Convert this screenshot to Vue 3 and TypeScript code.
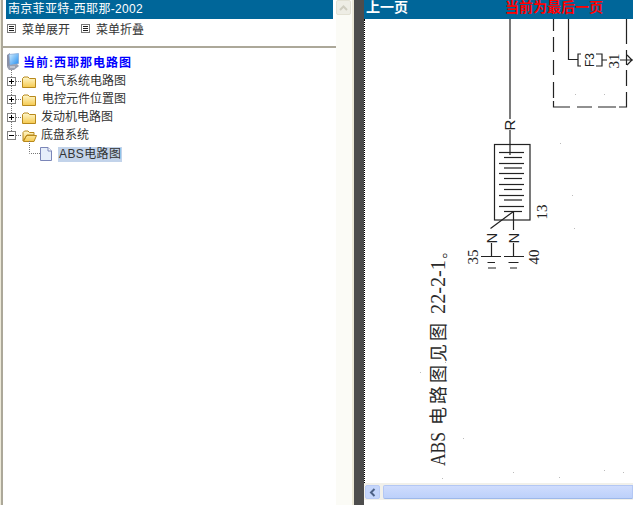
<template>
  <div class="page">
    <div class="edge"></div>
    <div class="left">
      <div class="title">南京菲亚特-西耶那-2002</div>
      <div class="menu">
        <span v-for="m in menus" :key="m" class="menu-item">
          <svg width="9" height="9" viewBox="0 0 9 9">
            <rect x="0.5" y="0.5" width="8" height="8" fill="#fff" stroke="#777" />
            <path d="M2 2.5h5M2 4.5h5M2 6.5h5" stroke="#222" />
          </svg>
          {{ m }}
        </span>
      </div>
      <div class="rule"></div>
      <div class="root">
        <svg width="12" height="17" viewBox="0 0 12 17">
          <defs>
            <linearGradient id="scr" x1="0" y1="0" x2="1" y2="1">
              <stop offset="0" stop-color="#d6efff" />
              <stop offset="1" stop-color="#1e8cf0" />
            </linearGradient>
          </defs>
          <path d="M0 2l3-2v13l-3 1z" fill="#8a90a4" />
          <path d="M2 1.5L11.5 0.5V10.5L3 12.5z" fill="url(#scr)" stroke="#7fa4d2" stroke-width="0.7" />
          <path d="M0 14l3-2 7-1 2 2-5 4H2z" fill="#9aa0b0" />
          <path d="M3 14h5" stroke="#e6e8ee" />
        </svg>
        <span class="root-label">当前:西耶那电路图</span>
      </div>
      <div v-for="(node, i) in nodes" :key="node.label" class="row">
        <svg width="15" height="18" viewBox="0 0 15 18" class="toggle">
          <path
            :d="i === nodes.length - 1 ? 'M4.5 0V7' : 'M4.5 0V18'"
            stroke="#777"
            stroke-dasharray="1 1"
          />
          <path d="M9 11.5h6" stroke="#777" stroke-dasharray="1 1" />
          <rect x="0.5" y="7.5" width="8" height="8" fill="#fff" stroke="#808080" />
          <path d="M2 11.5h5" stroke="#000" />
          <path v-if="!node.open" d="M4.5 9v5" stroke="#000" />
        </svg>
        <svg width="15" height="14" viewBox="0 0 15 14" class="folder">
          <defs>
            <linearGradient id="fold" x1="0" y1="0" x2="0" y2="1">
              <stop offset="0" stop-color="#fff8cf" />
              <stop offset="1" stop-color="#f5c94e" />
            </linearGradient>
          </defs>
          <path
            v-if="node.open"
            d="M1 12V3.5L2.5 2H6l1.5 1.5H12V6H5L1 12zM1.5 12.5L4.5 6.5H14.5L12 12.5z"
            fill="url(#fold)"
            stroke="#b8891c"
          />
          <path
            v-else
            d="M0.5 12.5V3.5L2 2H6L7.5 3.5H13.5V12.5z"
            fill="url(#fold)"
            stroke="#b8891c"
          />
        </svg>
        <span class="label" :style="{ marginLeft: node.gap + 'px' }">{{ node.label }}</span>
      </div>
      <div class="row child">
        <svg width="11" height="18" viewBox="0 0 11 18" class="branch">
          <path d="M0.5 -4V8.5H11" fill="none" stroke="#777" stroke-dasharray="1 1" />
        </svg>
        <svg width="12" height="14" viewBox="0 0 12 14">
          <path d="M0.5 0.5H8L11.5 4V13.5H0.5z" fill="#e6eefa" stroke="#7b86b8" />
          <path d="M8 0.5V4H11.5" fill="#fff" stroke="#7b86b8" />
        </svg>
        <span class="label selected">ABS电路图</span>
      </div>
    </div>
    <div class="vbar">
      <div class="vbar-btn">
        <svg width="9" height="6" viewBox="0 0 9 6">
          <path d="M1 5l3.5-3.5L8 5" fill="none" stroke="#cfcdc0" stroke-width="2" />
        </svg>
      </div>
    </div>
    <div class="gap"></div>
    <div class="splitter"></div>
    <div class="right">
      <div class="pager">
        <span class="prev">上一页</span>
        <span class="last">当前为最后一页</span>
      </div>
      <div class="sheet">
        <svg class="drawing" width="268" height="464" viewBox="365 19 268 464">
          <g stroke="#222" fill="none" stroke-width="1.2">
            <path d="M510 19V119M510 130V155" />
            <rect x="494.5" y="144.5" width="35.5" height="75.5" />
            <path v-for="b in bars" :key="b.y" :d="`M${b.x1} ${b.y}H${b.x2}`" />
            <path d="M513.5 211.5L490.5 228.5M513.5 211.5V230" />
            <path d="M491.5 243V257M513.5 243V257" />
            <path d="M481 256.5H501M504 256.5H524" />
            <path d="M487.5 262.5H495M508.5 262.5H518.5M488 268H496M510 268H517" />
            <!-- dashed box, top right -->
            <path
              d="M553.5 19V31M553.5 37V52M553.5 60V75M553.5 82V98M553.5 101V107H570M577 107H592M598 107H616M619 107H626.5V92M626.5 86V70M626.5 65V50M626.5 44V19"
            />
            <path d="M568.5 19V59.5H578" />
            <path d="M581 54H578V66H581M596 54H602V66H596" />
            <path d="M602 60H607M620 60H633M627 55L632 60L627 65" />
          </g>
          <g class="scan">
            <text transform="translate(515 125) rotate(-90)" text-anchor="middle">R</text>
            <text transform="translate(497 238) rotate(-90)" text-anchor="middle">N</text>
            <text transform="translate(519 238) rotate(-90)" text-anchor="middle">N</text>
            <text class="num" transform="translate(478 257) rotate(-90)" text-anchor="middle">35</text>
            <text class="num" transform="translate(539 257) rotate(-90)" text-anchor="middle">40</text>
            <text class="num" transform="translate(547 212) rotate(-90)" text-anchor="middle">13</text>
            <text class="small" transform="translate(594 60) rotate(-90)" text-anchor="middle">F3</text>
            <text class="num" transform="translate(619 61) rotate(-90)" text-anchor="middle">31</text>
          </g>
          <g class="note" transform="translate(445 466) rotate(-90)">
            <text class="latin" x="0" textLength="34" lengthAdjust="spacingAndGlyphs">ABS</text>
            <text class="cjk" x="41">电路图见图</text>
            <text class="latin" x="152" textLength="54" lengthAdjust="spacingAndGlyphs">22-2-1</text>
            <text class="latin" x="206">。</text>
          </g>
          <rect v-for="s in specks" :key="s[0] + '-' + s[1]" :x="s[0]" :y="s[1]" width="1" height="1" fill="#bbb" />
        </svg>
      </div>
      <div class="hbar">
        <div class="hbar-btn">
          <svg width="7" height="9" viewBox="0 0 7 9">
            <path d="M5.5 1L2 4.5L5.5 8" fill="none" stroke="#4d6185" stroke-width="2" />
          </svg>
        </div>
        <div class="hbar-thumb"></div>
      </div>
      <div class="foot"></div>
    </div>
  </div>
</template>

<script setup lang="ts">
interface TreeNode {
  label: string
  open: boolean
  gap: number
}

const menus = ['菜单展开', '菜单折叠']

const nodes: TreeNode[] = [
  { label: '电气系统电路图', open: false, gap: 5 },
  { label: '电控元件位置图', open: false, gap: 5 },
  { label: '发动机电路图', open: false, gap: 4 },
  { label: '底盘系统', open: true, gap: 4 },
]

// the resistor strips inside the box
const bars = [
  { y: 152.5, x1: 499, x2: 524 },
  { y: 157.5, x1: 504, x2: 522 },
  { y: 163.5, x1: 499, x2: 524 },
  { y: 168, x1: 504, x2: 522 },
  { y: 173.5, x1: 499, x2: 524 },
  { y: 178.5, x1: 504, x2: 522 },
  { y: 184.5, x1: 499, x2: 524 },
  { y: 189.5, x1: 504, x2: 522 },
  { y: 195.5, x1: 499, x2: 524 },
  { y: 200, x1: 504, x2: 522 },
  { y: 206.5, x1: 499, x2: 524 },
  { y: 211.5, x1: 504, x2: 522 },
]

const specks = [
  [560, 143], [572, 195], [574, 228], [445, 362], [463, 438], [420, 372],
  [442, 478], [513, 472], [559, 477], [604, 470], [623, 472], [575, 94], [604, 94],
]
</script>

<style>
html,
body {
  margin: 0;
  background: #fff;
}
</style>

<style scoped>
.page {
  display: flex;
  width: 633px;
  height: 505px;
  overflow: hidden;
  background: #fff;
  font-family: "Liberation Sans", "Noto Sans CJK SC", sans-serif;
  font-size: 12px;
  color: #333;
}

.edge {
  width: 3px;
  box-sizing: border-box;
  border-left: 1px solid #ece9d8;
  background: #aca899;
  flex: none;
}

.left {
  width: 333px;
  flex: none;
}

.title {
  height: 19px;
  margin: 0 3px;
  padding-left: 2px;
  line-height: 18px;
  background: #006699;
  color: #fff;
  letter-spacing: 0.3px;
  white-space: nowrap;
}

.menu {
  display: flex;
  gap: 11px;
  height: 19px;
  padding-left: 4px;
  align-items: center;
}

.menu-item {
  display: flex;
  align-items: center;
  gap: 6px;
}

.rule {
  height: 2px;
  margin-top: 8px;
  background: #aca899;
}

.root {
  display: flex;
  align-items: center;
  gap: 4px;
  height: 17px;
  margin: 5px 0 0 4px;
}

.root-label {
  color: #0000ff;
  font-weight: bold;
  letter-spacing: 1px;
}

.row {
  display: flex;
  align-items: center;
  height: 18px;
  padding-left: 4px;
  white-space: nowrap;
}

.toggle {
  flex: none;
}

.folder {
  flex: none;
  margin-top: 6px;
}

.child {
  padding-left: 26px;
  margin-top: 3px;
}

.branch {
  flex: none;
  overflow: visible;
}

.selected {
  margin-left: 6px;
  padding: 0 1px;
  line-height: 15px;
  background: #c2d3ea;
  letter-spacing: 0.4px;
}

.vbar {
  width: 16px;
  flex: none;
  background: #fbfbf6;
}

.vbar-btn {
  display: flex;
  align-items: center;
  justify-content: center;
  width: 15px;
  height: 15px;
  box-sizing: border-box;
  border: 1px solid #e3e1d4;
  border-radius: 2px;
  background: #eeede5;
}

.gap {
  width: 2px;
  flex: none;
  background: #ece9d8;
}

.splitter {
  width: 10px;
  flex: none;
  background: #4d4d4d;
}

.right {
  display: flex;
  flex-direction: column;
  flex: 1;
  min-width: 0;
}

.pager {
  display: flex;
  height: 19px;
  padding-left: 2px;
  background: #006699;
  font-size: 14px;
  line-height: 15px;
  font-weight: bold;
  color: #fff;
}

.last {
  margin-left: 97px;
  color: #ff0000;
}

.sheet {
  flex: 1;
  min-height: 0;
  box-sizing: border-box;
  border-left: 1px dotted #000;
  overflow: hidden;
}

.drawing {
  display: block;
}

.scan text {
  font-family: "Liberation Sans", sans-serif;
  font-size: 15px;
  fill: #222;
}

.scan .num {
  font-family: "Liberation Serif", serif;
}

.scan .small {
  font-size: 12px;
}

.note text {
  fill: #2a2a2a;
}

.latin {
  font-family: "Liberation Serif", serif;
  font-size: 20px;
}

.cjk {
  font-family: "Noto Sans CJK SC", sans-serif;
  font-size: 18px;
  font-weight: 400;
  letter-spacing: 3px;
}

.hbar {
  display: flex;
  gap: 3px;
  height: 17px;
  box-sizing: border-box;
  padding-top: 2px;
  background: #f1f0ea;
}

.hbar-btn {
  display: flex;
  align-items: center;
  justify-content: center;
  width: 15px;
  height: 14px;
  margin-left: 1px;
  box-sizing: border-box;
  border: 1px solid #b9cbf6;
  border-radius: 2px;
  background: #c5d6fb;
}

.hbar-thumb {
  flex: 1;
  height: 14px;
  box-sizing: border-box;
  border: 1px solid #b3c7f4;
  border-bottom-color: #9db8ea;
  border-radius: 2px 0 0 2px;
  background: linear-gradient(#cfdcfd, #bcd0fa);
}

.foot {
  height: 5px;
  flex: none;
}
</style>
